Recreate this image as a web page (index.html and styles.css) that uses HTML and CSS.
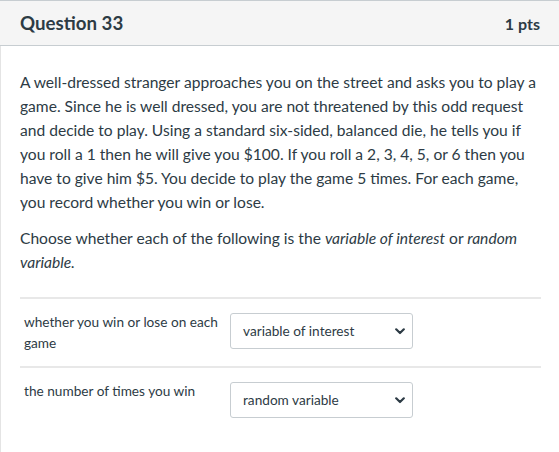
FILE: index.html
```html
<!DOCTYPE html>
<html>
<head>
<meta charset="utf-8">
<link rel="stylesheet" href="styles.css">
</head>
<body>
<div class="question">
  <div class="header">
    <h2 class="title">Question 33</h2>
    <span class="pts">1 pts</span>
  </div>
  <div class="content">
    <p>A well-dressed stranger approaches you on the street and asks you to play a game. Since he is well dressed, you are not threatened by this odd request and decide to play. Using a standard six-sided, balanced die, he tells you if you roll a 1 then he will give you $100. If you roll a 2, 3, 4, 5, or 6 then you have to give him $5. You decide to play the game 5 times. For each game, you record whether you win or lose.</p>
    <p>Choose whether each of the following is the <em>variable of interest</em> or <em>random variable.</em></p>
    <div class="answers">
      <div class="row">
        <div class="label">whether you win or lose on each game</div>
        <div class="select"><span>variable of interest</span><svg class="chev" width="10" height="7" viewBox="0 0 10 7"><path d="M1.2 1.3 L5 5 L8.8 1.3" fill="none" stroke="#2d3b45" stroke-width="2.2" stroke-linecap="round" stroke-linejoin="round"/></svg></div>
      </div>
      <div class="row">
        <div class="label">the number of times you win</div>
        <div class="select"><span>random variable</span><svg class="chev" width="10" height="7" viewBox="0 0 10 7"><path d="M1.2 1.3 L5 5 L8.8 1.3" fill="none" stroke="#2d3b45" stroke-width="2.2" stroke-linecap="round" stroke-linejoin="round"/></svg></div>
      </div>
    </div>
  </div>
</div>
</body>
</html>
```
FILE: styles.css
```css
* { box-sizing: border-box; }
html, body { margin: 0; padding: 0; background: #fff; }
body {
  font-family: Lato, "Open Sans", sans-serif;
  color: #2d3b45;
  width: 559px;
  height: 452px;
  overflow: hidden;
}
.question {
  border-left: 1px solid #e4e4e4;
  min-height: 452px;
}
.header {
  display: flex;
  justify-content: space-between;
  align-items: center;
  height: 46px;
  background: #f5f5f5;
  border-top: 1px solid #c7cdd1;
  border-bottom: 1px solid #c7cdd1;
  margin-left: -1px;
  padding: 0 19px 0 20px;
}
.title {
  margin: 0;
  font-size: 18.7px;
  font-weight: 700;
}
.pts {
  font-size: 16px;
  font-weight: 700;
}
.content {
  padding: 24px 18px 0 19px;
}
.content p {
  margin: 0 0 12px;
  font-size: 15.6px;
  line-height: 24px;
}
.answers {
  margin-top: 23px;
}
.row {
  display: flex;
  align-items: flex-start;
  border-top: 2px solid #e8e8e8;
  padding: 14px 0 12px 4px;
}
.label {
  width: 206px;
  font-size: 13.65px;
  line-height: 21px;
  margin-top: -1px;
}
.select {
  display: flex;
  align-items: center;
  justify-content: space-between;
  width: 183px;
  height: 36px;
  border: 1px solid #c7cdd1;
  border-radius: 3px;
  padding: 0 7px 0 12px;
  font-size: 13.65px;
  background: #fff;
}
.chev { display: block; }
```
